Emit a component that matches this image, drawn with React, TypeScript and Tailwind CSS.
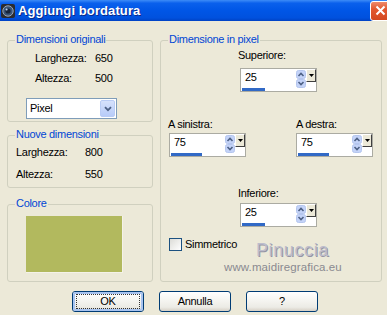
import React from "react";

function Group({ label, className, children }: { label: string; className: string; children?: React.ReactNode }) {
  return (
    <div className={"relative rounded-[3px] border border-[#D0D0BF] " + className}>
      <span className="absolute left-[7px] top-[-8px] bg-[#ECE9D8] px-[1px] leading-[13px] text-[#0046D5]">{label}</span>
      {children}
    </div>
  );
}

function SpinArrows() {
  return (
    <svg width="10" height="18" viewBox="0 0 10 18" className="block">
      <rect x="0.5" y="0.5" width="9" height="8" rx="2" fill="#C4D3F8" stroke="#B5C6EE" />
      <rect x="0.5" y="9.5" width="9" height="8" rx="2" fill="#C4D3F8" stroke="#B5C6EE" />
      <path d="M2.5 6 L5 3.5 L7.5 6" fill="none" stroke="#4D6185" strokeWidth="1.6" />
      <path d="M2.5 12 L5 14.5 L7.5 12" fill="none" stroke="#4D6185" strokeWidth="1.6" />
    </svg>
  );
}

function Spinner({ value, barClass }: { value: string; barClass: string }) {
  return (
    <div className="flex h-[24px] w-[77px] border border-[#ABABA2] bg-white">
      <div className="flex flex-1 flex-col pl-[1px] pt-[2px]">
        <span className="pl-[3px] leading-[13px]">{value}</span>
        <div className={"mt-[4px] h-[3px] bg-[#3169C6] " + barClass} />
      </div>
      <div className="pt-[1px]">
        <SpinArrows />
      </div>
      <div className="flex h-[13px] w-[10px] items-center justify-center border-t border-l border-t-white border-l-white border-r border-b border-r-[#404040] border-b-[#404040] bg-[#ECE9D8]">
        <svg width="5" height="3" viewBox="0 0 5 3" className="block">
          <path d="M0 0 H5 L2.5 3 Z" fill="#000" />
        </svg>
      </div>
    </div>
  );
}

function XPButton({ label, isDefault }: { label: string; isDefault?: boolean }) {
  return (
    <div className="flex h-[21px] w-[72px] items-center justify-center rounded-[3px] border border-[#003C74] bg-[linear-gradient(to_bottom,#FFFFFF_0%,#F6F6F2_40%,#ECEBE5_80%,#D6D0C5_100%)]">
      {isDefault ? (
        <div className="flex h-full w-full items-center justify-center rounded-[2px] border-[2px] border-[#A8C4F0]">
          <div className="flex h-[15px] w-[64px] items-center justify-center border border-dotted border-[#333]">{label}</div>
        </div>
      ) : (
        <span>{label}</span>
      )}
    </div>
  );
}

export default function App() {
  return (
    <div className="relative h-[315px] w-[387px] overflow-hidden bg-[#ECE9D8] text-[11px] leading-[13px] tracking-[-0.3px] text-black [font-family:'Liberation_Sans',Arial,sans-serif]">
      {/* Title bar */}
      <div className="flex h-[21px] items-center bg-[linear-gradient(to_bottom,#3D8CF7_0%,#0A60EC_15%,#0056E6_50%,#0051DE_85%,#0042C4_100%)]">
        <svg width="14" height="14" viewBox="0 0 14 14" className="ml-[1px] block">
          <rect x="0" y="0" width="14" height="14" rx="2" fill="#2B2B2E" />
          <circle cx="7" cy="7" r="5.2" fill="#3A5577" stroke="#9AA6B8" strokeWidth="1" />
          <circle cx="7" cy="7" r="2.6" fill="#16243A" />
          <circle cx="5.6" cy="5.6" r="1" fill="#BFD3EE" />
        </svg>
        <span className="ml-[3px] text-[13px] font-bold tracking-[0.1px] text-white [text-shadow:1px_1px_#0A2A8C]">
          Aggiungi bordatura
        </span>
        <div className="ml-auto mr-[-4px] flex h-[20px] w-[21px] items-center justify-center rounded-[3px] border border-white bg-[linear-gradient(to_bottom,#EE8A6A_0%,#E2582F_40%,#D4481F_100%)]">
          <svg width="11" height="11" viewBox="0 0 11 11" className="block">
            <path d="M1.5 1.5 L9.5 9.5 M9.5 1.5 L1.5 9.5" stroke="#fff" strokeWidth="2" />
          </svg>
        </div>
      </div>

      {/* Body */}
      <div className="flex gap-[7px] pl-[7px] pt-[19px]">
        {/* Left column */}
        <div className="flex w-[146px] flex-col">
          <Group label="Dimensioni originali" className="h-[82px] pt-[11px]">
            <div className="flex h-[13px] pl-[27px]">
              <span className="w-[60px]">Larghezza:</span>
              <span>650</span>
            </div>
            <div className="mt-[7px] flex h-[13px] pl-[27px]">
              <span className="w-[60px]">Altezza:</span>
              <span>500</span>
            </div>
            <div className="ml-[18px] mt-[13px] flex h-[21px] w-[91px] border border-[#7F9DB9] bg-white">
              <span className="flex-1 pl-[3px] pt-[3px]">Pixel</span>
              <div className="m-[1px] flex w-[15px] items-center justify-center rounded-[2px] border border-[#B9CCF5] bg-[linear-gradient(to_bottom,#D6E2FC,#B7CBF8)]">
                <svg width="8" height="6" viewBox="0 0 8 6" className="block">
                  <path d="M1 1.2 L4 4.2 L7 1.2" fill="none" stroke="#4D6185" strokeWidth="1.8" />
                </svg>
              </div>
            </div>
          </Group>

          <Group label="Nuove dimensioni" className="mt-[13px] h-[53px] pt-[10px]">
            <div className="flex h-[13px] pl-[8px]">
              <span className="w-[69px]">Larghezza:</span>
              <span>800</span>
            </div>
            <div className="mt-[9px] flex h-[13px] pl-[8px]">
              <span className="w-[69px]">Altezza:</span>
              <span>550</span>
            </div>
          </Group>

          <Group label="Colore" className="mt-[16px] h-[78px] pt-[11px]">
            <div className="ml-[18px] h-[57px] w-[97px] border-b border-r border-b-[#F4F2E8] border-r-[#F4F2E8] bg-[#B2B95E]" />
          </Group>
        </div>

        {/* Right group */}
        <Group label="Dimensione in pixel" className="h-[242px] w-[222px] pt-[8px]">
          <div className="ml-[77px] h-[13px]">Superiore:</div>
          <div className="ml-[79px] mt-[6px]">
            <Spinner value="25" barClass="w-[23px]" />
          </div>
          <div className="mt-[26px] flex h-[13px]">
            <span className="ml-[7px] w-[128px]">A sinistra:</span>
            <span>A destra:</span>
          </div>
          <div className="mt-[2px] flex">
            <div className="ml-[8px] w-[127px]">
              <Spinner value="75" barClass="w-[31px]" />
            </div>
            <Spinner value="75" barClass="w-[31px]" />
          </div>
          <div className="ml-[77px] mt-[30px] h-[13px]">Inferiore:</div>
          <div className="ml-[79px] mt-[3px]">
            <Spinner value="25" barClass="w-[23px]" />
          </div>
          <div className="ml-[8px] mt-[11px] flex items-center">
            <div className="h-[13px] w-[13px] border border-[#1C5180] bg-[linear-gradient(135deg,#DCDCD7,#FFFFFF)]" />
            <span className="ml-[3px]">Simmetrico</span>
          </div>
          {/* watermark */}
          <div className="absolute left-[63px] top-[198px] flex flex-col items-start">
            <span className="ml-[32px] text-[18px] leading-[22px] tracking-[0.6px] text-[#BDBDCC] [font-family:'Liberation_Sans',sans-serif] [text-shadow:1px_1px_#9494A4]">
              Pinuccia
            </span>
            <span className="text-[11.5px] leading-[13px] tracking-[0.1px] text-[#8A8A90] [font-family:'Liberation_Sans',sans-serif]">
              www.maidiregrafica.eu
            </span>
          </div>
        </Group>
      </div>

      {/* Buttons */}
      <div className="mt-[9px] flex gap-[15px] pl-[72px]">
        <XPButton label="OK" isDefault />
        <XPButton label="Annulla" />
        <XPButton label="?" />
      </div>
    </div>
  );
}
